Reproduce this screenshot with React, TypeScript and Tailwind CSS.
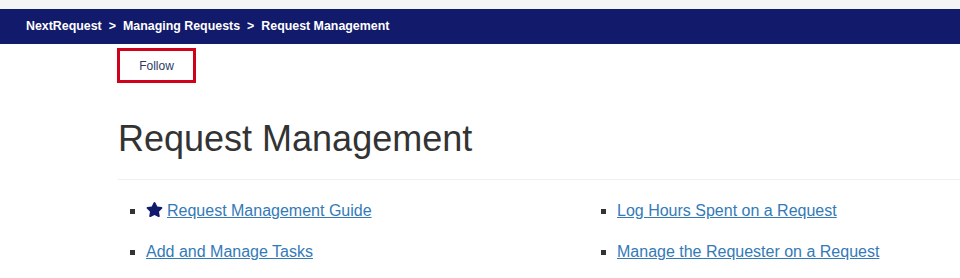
import { FaStar } from 'react-icons/fa';

const links = [
  { label: 'Request Management Guide', star: true },
  { label: 'Log Hours Spent on a Request' },
  { label: 'Add and Manage Tasks' },
  { label: 'Manage the Requester on a Request' },
];

const App = () => {
  return (
    <div className="w-[960px] h-[278px] overflow-hidden bg-white font-['Liberation_Sans',Arial,sans-serif]">
      <div className="h-[9px] bg-[#f5f5f5]" />
      <nav className="h-[35px] bg-[#121a6b] flex items-center pl-[26px] text-[12.4px] font-bold text-white">
        <span>NextRequest</span>
        <span className="mx-[7px]">&gt;</span>
        <span>Managing Requests</span>
        <span className="mx-[7px]">&gt;</span>
        <span>Request Management</span>
      </nav>
      <div className="pl-[117px]">
        <button className="mt-[4px] w-[79px] h-[35px] border-[3px] border-[#d0021b] text-[12px] text-[#2b3a67]">
          Follow
        </button>
        <h1 className="ml-[1px] mt-[36px] text-[36px] leading-[40px] text-[#333333] font-normal">Request Management</h1>
        <div className="ml-[1px] mt-[20px] border-t border-[#eeeeee]" />
        <ul className="ml-[1px] mt-[21px] grid grid-cols-[471px_471px] gap-y-[21px]">
          {links.map((l) => (
            <li key={l.label} className="flex items-center h-[20px] pl-[12px]">
              <span className="w-[5px] h-[5px] bg-[#333333] mr-[11px] shrink-0" />
              {l.star && <FaStar className="w-[17px] h-[17px] mr-[4px] text-[#121a6b] shrink-0 -mt-[3px]" />}
              <a href="#" className="text-[16px] text-[#337ab7] underline">
                {l.label}
              </a>
            </li>
          ))}
        </ul>
      </div>
    </div>
  );
};

export default App;
